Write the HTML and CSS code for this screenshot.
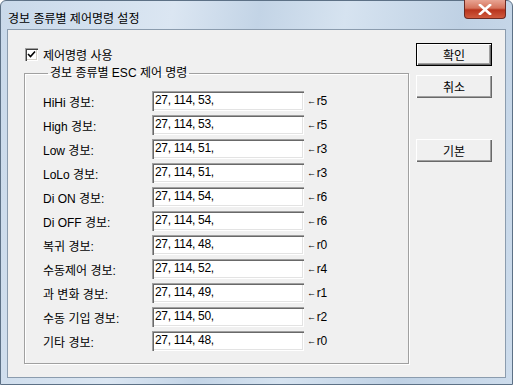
FILE: index.html
```html
<!DOCTYPE html>
<html lang="ko">
<head>
    <meta charset="UTF-8">
    <title>경보 종류별 제어명령 설정</title>
    <link rel="stylesheet" href="styles.css">
</head>
<body>
    <div class="window">
        <div class="titlebar">
            <span class="title">경보 종류별 제어명령 설정</span>
            <span class="close">
                <svg width="14" height="11" viewBox="0 0 14 11">
                    <path d="M2 1 L12 10 M12 1 L2 10" stroke="#fff" stroke-width="2.6" stroke-linecap="square"/>
                </svg>
            </span>
        </div>
        <div class="client">
            <div class="main">
                <div class="check">
                    <span class="box">
                        <svg width="9" height="9" viewBox="0 0 9 9">
                            <path d="M1 4 L3.5 6.5 L8 1.5" stroke="#000" stroke-width="1.6" fill="none"/>
                        </svg>
                    </span>
                    <span>제어명령 사용</span>
                </div>
                <fieldset class="group">
                    <legend>경보 종류별 ESC 제어 명령</legend>
                    <div class="rows">
                        <span class="lbl">HiHi 경보:</span><span class="edit">27, 114, 53,</span><span class="hint"><i>←</i>r5</span>
                        <span class="lbl">High 경보:</span><span class="edit">27, 114, 53,</span><span class="hint"><i>←</i>r5</span>
                        <span class="lbl">Low 경보:</span><span class="edit">27, 114, 51,</span><span class="hint"><i>←</i>r3</span>
                        <span class="lbl">LoLo 경보:</span><span class="edit">27, 114, 51,</span><span class="hint"><i>←</i>r3</span>
                        <span class="lbl">Di ON 경보:</span><span class="edit">27, 114, 54,</span><span class="hint"><i>←</i>r6</span>
                        <span class="lbl">Di OFF 경보:</span><span class="edit">27, 114, 54,</span><span class="hint"><i>←</i>r6</span>
                        <span class="lbl">복귀 경보:</span><span class="edit">27, 114, 48,</span><span class="hint"><i>←</i>r0</span>
                        <span class="lbl">수동제어 경보:</span><span class="edit">27, 114, 52,</span><span class="hint"><i>←</i>r4</span>
                        <span class="lbl">과 변화 경보:</span><span class="edit">27, 114, 49,</span><span class="hint"><i>←</i>r1</span>
                        <span class="lbl">수동 기입 경보:</span><span class="edit">27, 114, 50,</span><span class="hint"><i>←</i>r2</span>
                        <span class="lbl">기타 경보:</span><span class="edit">27, 114, 48,</span><span class="hint"><i>←</i>r0</span>
                    </div>
                </fieldset>
            </div>
            <div class="buttons">
                <button class="btn default">확인</button>
                <button class="btn">취소</button>
                <button class="btn spaced">기본</button>
            </div>
        </div>
    </div>
</body>
</html>
```

FILE: styles.css
```css
/* Vista frame with a classic (unthemed) dialog inside */
body {
    margin: 0;
    font-family: "Liberation Sans", "Noto Sans CJK KR", sans-serif;
    font-size: 12px;
    color: #000;
}
.window {
    width: 513px;
    height: 385px;
    box-sizing: border-box;
    border: 1px solid #5d7186;
    border-radius: 6px 6px 0 0;
    background: linear-gradient(100deg, #c9d9ea 0%, #dbe6f2 30%, #c3d4e6 45%, #d6e3f0 60%, #bfd1e4 80%, #cddcec 100%);
    display: flex;
    flex-direction: column;
}
.titlebar {
    height: 28px;
    display: flex;
    align-items: flex-start;
    justify-content: space-between;
    padding-left: 7px;
}
.title {
    margin-top: 8px;
    font-size: 12px;
}
.close {
    width: 40px;
    height: 18px;
    margin-right: 6px;
    margin-top: -1px;
    border: 1px solid #6b2a23;
    border-top: none;
    border-radius: 0 0 4px 4px;
    background: linear-gradient(#e8a493 0%, #d5735c 45%, #b8341d 55%, #cf5a3e 100%);
    display: flex;
    align-items: center;
    justify-content: center;
}
.client {
    flex: 1;
    margin: 0 6px 6px 6px;
    border: 1px solid #8b9cae;
    background: #f0f0f0;
    display: flex;
}
.main {
    padding: 16px 0 0 16px;
    display: flex;
    flex-direction: column;
}
.check {
    display: flex;
    align-items: center;
    gap: 5px;
    height: 16px;
    margin-left: 1px;
}
.box {
    width: 9px;
    height: 9px;
    padding: 2px;
    background: #fff;
    box-shadow: inset 1px 1px 0 #a0a0a0, inset 2px 2px 0 #404040, inset -1px -1px 0 #fff, inset -2px -2px 0 #d4d0c8;
    display: flex;
    align-items: center;
    justify-content: center;
}
.group {
    margin: 4px 0 0 0;
    width: 385px;
    height: 298px;
    box-sizing: border-box;
    padding: 11px 0 0 18px;
    border: 1px solid #a0a0a0;
    box-shadow: 1px 1px 0 #fff, inset 1px 1px 0 #fff;
}
.group legend {
    padding: 0 2px;
    margin-left: 5px;
    line-height: 14px;
}
.rows {
    display: grid;
    grid-template-columns: 109px 152px auto;
    grid-auto-rows: 20px;
    row-gap: 4px;
    align-items: center;
}
.edit {
    height: 20px;
    box-sizing: border-box;
    padding: 2px 0 0 3px;
    background: #fff;
    box-shadow: inset 1px 1px 0 #a0a0a0, inset 2px 2px 0 #696969, inset -1px -1px 0 #fff, inset -2px -2px 0 #e3e3e3;
    line-height: 14px;
    letter-spacing: -0.3px;
}
.hint {
    padding-left: 3px;
    display: flex;
    align-items: center;
    letter-spacing: -0.3px;
}
.hint i {
    font-style: normal;
    font-size: 9px;
    margin-right: 1px;
}
.buttons {
    padding: 13px 0 0 7px;
    display: flex;
    flex-direction: column;
    gap: 9px;
}
.btn {
    width: 76px;
    height: 23px;
    padding: 0;
    font-family: inherit;
    font-size: 12px;
    background: #f0f0f0;
    border: none;
    box-shadow: inset 1px 1px 0 #fff, inset -1px -1px 0 #696969, inset -2px -2px 0 #a0a0a0;
}
.btn.default {
    box-shadow: inset 0 0 0 1px #000, inset 2px 2px 0 #fff, inset -2px -2px 0 #696969, inset -3px -3px 0 #a0a0a0;
}
.btn.spaced {
    margin-top: 32px;
}
```
